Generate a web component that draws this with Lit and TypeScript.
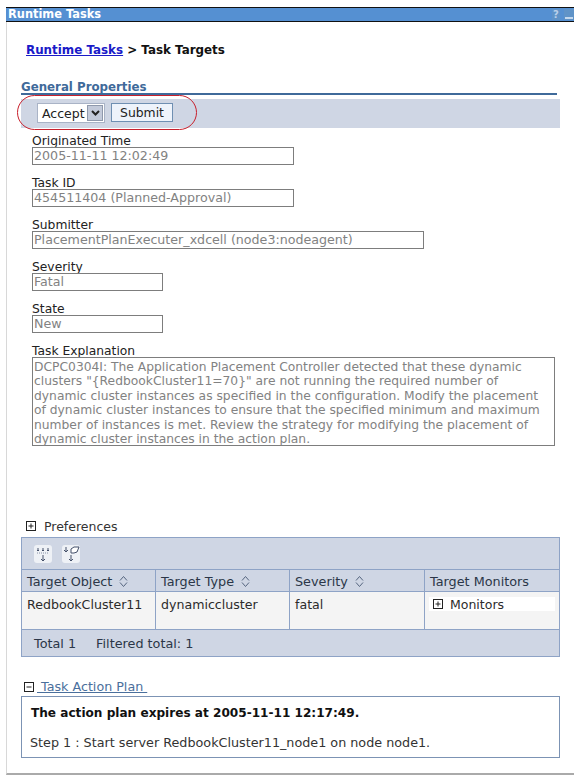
import { LitElement, html, css, svg } from "lit";
import { customElement } from "lit/decorators.js";

const expl = [
  "DCPC0304I: The Application Placement Controller detected that these dynamic",
  'clusters "{RedbookCluster11=70}" are not running the required number of',
  "dynamic cluster instances as specified in the configuration. Modify the placement",
  "of dynamic cluster instances to ensure that the specified minimum and maximum",
  "number of instances is met. Review the strategy for modifying the placement of",
  "dynamic cluster instances in the action plan.",
];

const sortIcon = html`<svg class="sort" width="9" height="13" viewBox="0 0 9 13"><path d="M4.500 1.500 8 5.500M4.500 1.500 1 5.500M4.500 11.500 8 7.500M4.500 11.500 1 7.500" fill="none" stroke="#55657f" stroke-width="1"/></svg>`;
const plus = html`<svg class="tw" width="10" height="10" viewBox="0 0 10 10"><rect x=".5" y=".5" width="9" height="9" fill="#fff" stroke="#222"/><path d="M2.500 5h5M5 2.500v5" stroke="#222"/></svg>`;
const minus = html`<svg class="tw" width="10" height="10" viewBox="0 0 10 10"><rect x=".5" y=".5" width="9" height="9" fill="#fff" stroke="#222"/><path d="M2.500 5h5" stroke="#222"/></svg>`;

@customElement("app-root")
export class AppRoot extends LitElement {
  static styles = css`
    :host { display: block; width: 581px; height: 780px; background: #fff; font-family: "DejaVu Sans", Verdana, sans-serif; font-size: 12.5px; color: #222; overflow: hidden; }
    .frame { position: relative; margin: 7px 7px 0 6px; height: 768px; box-sizing: border-box; border-left: 1px solid #d8d8d8; border-bottom: 2px solid #aaa; }
    .title { height: 15px; box-sizing: border-box; margin-left: -1px; background: #5590d2; border-top: 1px solid #111; border-bottom: 1px solid #111; display: flex; align-items: center; justify-content: space-between; color: #fff; font-weight: bold; font-size: 11.4px; padding: 0 0 0 2px; line-height: 13px; }
    .wicons { display: flex; gap: 4px; align-items: center; }
    .help { width: 8px; height: 11px; font-size: 10px; line-height: 11px; text-align: center; color: #b9d0ea; background: #5f93c8; }
    .min { width: 10px; height: 11px; background: #5f93c8; display: flex; align-items: flex-end; justify-content: center; padding-bottom: 1px; box-sizing: border-box; }
    .min i { display: block; width: 8px; height: 2px; background: #c4d8ee; }
    .crumb { margin: 20px 0 0 19px; height: 15px; line-height: 17px; font-weight: bold; font-size: 11.9px; color: #111; }
    .crumb a { color: #1a1ac8; text-decoration: underline; }
    .gp { margin: 21px 0 0 14px; width: 536px; height: 17px; box-sizing: border-box; border-bottom: 2px solid #3f6a9a; color: #3f6a9a; font-weight: bold; font-size: 11.8px; line-height: 19px; }
    .band { margin: 4px 0 0 14px; width: 539px; height: 29px; background: #cfd6e4; display: flex; align-items: flex-start; padding: 4px 0 0 16px; box-sizing: border-box; gap: 6px; }
    .sel { width: 68px; height: 20px; box-sizing: border-box; background: #fff; border: 1px solid #a9b3c6; display: flex; align-items: center; justify-content: space-between; padding: 0 1px 0 4px; font-size: 12.5px; color: #222; }
    .sel i { width: 16px; height: 16px; background: #c3cada; border: 1px solid #8f99ac; box-sizing: border-box; display: flex; align-items: center; justify-content: center; }
    .btn { width: 62px; height: 19px; box-sizing: border-box; background: #eef3fb; border: 1px solid #6f8fb2; text-align: center; line-height: 17px; font-size: 12.4px; color: #222; }
    .oval { position: absolute; left: 10px; top: 88px; width: 180px; height: 35px; box-sizing: border-box; border: 1.500px solid #c8202c; border-radius: 18px; }
    .fields { margin: 4px 0 0 25px; display: flex; flex-direction: column; gap: 9px; }
    .f { display: flex; flex-direction: column; }
    .f label { height: 15px; line-height: 19px; font-size: 12.3px; color: #222; }
    .v { height: 18px; box-sizing: border-box; border: 1px solid #7d7d7d; background: #fff; color: #828282; font-size: 12.65px; line-height: 15px; padding-left: 1px; white-space: nowrap; }
    .w262 { width: 262px; } .w392 { width: 392px; } .w131 { width: 131px; }
    .area { width: 523px; height: 89px; box-sizing: border-box; border: 1px solid #7d7d7d; color: #828282; font-size: 12.3px; line-height: 14.4px; padding: 2px 0 0 1px; white-space: nowrap; }
    .pref { margin: 72px 0 0 19px; height: 16px; display: flex; align-items: center; gap: 8px; font-size: 12.5px; color: #333; }
    .tw { flex: none; }
    .tbl { margin: 3px 0 0 14px; width: 539px; height: 120px; box-sizing: border-box; border: 1px solid #8ea3c6; background: #cfd6e4; display: flex; flex-direction: column; }
    .tools { height: 32px; display: flex; align-items: center; gap: 10px; padding-left: 12px; box-sizing: border-box; border-bottom: 1px solid #8ea3c6; }
    .tb { width: 18px; height: 18px; background: #eef1f6; border-radius: 3px; display: block; }
    .row { display: grid; grid-template-columns: 134px 134px 135px 1fr; }
    .head { height: 22px; border-bottom: 1px solid #8ea3c6; box-sizing: border-box; }
    .head div { display: flex; align-items: center; gap: 7px; padding: 1px 0 0 5px; border-right: 1px solid #8ea3c6; font-size: 12.8px; color: #2b3648; }
    .head div:last-child, .body div:last-child { border-right: 0; }
    .body { height: 38px; background: #f4f4f4; border-bottom: 1px solid #8ea3c6; box-sizing: border-box; }
    .body div { padding: 5px 0 0 5px; border-right: 1px solid #8ea3c6; font-size: 12.6px; line-height: 15px; color: #2b2b2b; }
    .body div.cell4 { padding: 5px 4px 0 4px; }
    .body div.mon { height: 14px; background: #fff; padding: 0 0 0 4px; display: flex; align-items: center; gap: 7px; border: 0; font-size: 12.5px; }
    .foot { flex: 1; display: flex; align-items: center; gap: 20px; padding: 1px 0 0 12px; font-size: 12.8px; color: #2b3648; }
    .tap { margin: 23px 0 0 17px; height: 16px; display: flex; align-items: flex-start; gap: 3px; font-size: 12.7px; line-height: 14px; }
    .tap .tw { margin-top: 2px; }
    .tap a { color: #4a6f9c; text-decoration: underline; white-space: pre; }
    .plan { margin: 0 0 0 14px; width: 539px; height: 62px; box-sizing: border-box; border: 1px solid #7c93b4; padding: 8px 0 0 9px; font-size: 12.75px; color: #222; }
    .plan b { display: block; color: #111; line-height: 16px; font-size: 12.1px; }
    .plan p { margin: 14px 0 0 -1px; line-height: 16px; color: #333; }
  `;

  render() {
    return html`<div class="frame">
      <div class="title"><span>Runtime Tasks</span><span class="wicons"><span class="help">?</span><span class="min"><i></i></span></span></div>
      <div class="crumb"><a>Runtime Tasks</a> &gt; Task Targets</div>
      <div class="gp">General Properties</div>
      <div class="band">
        <div class="sel">Accept<i><svg width="9" height="6" viewBox="0 0 9 6"><path d="M1 1l3.500 3.500L8 1" fill="none" stroke="#222" stroke-width="2"/></svg></i></div>
        <div class="btn">Submit</div>
      </div>
      <div class="oval"></div>
      <div class="fields">
        <div class="f"><label>Originated Time</label><div class="v w262">2005-11-11 12:02:49</div></div>
        <div class="f"><label>Task ID</label><div class="v w262">454511404 (Planned-Approval)</div></div>
        <div class="f"><label>Submitter</label><div class="v w392">PlacementPlanExecuter_xdcell (node3:nodeagent)</div></div>
        <div class="f"><label>Severity</label><div class="v w131">Fatal</div></div>
        <div class="f"><label>State</label><div class="v w131">New</div></div>
        <div class="f"><label>Task Explanation</label><div class="area">${expl.map((l) => html`<div>${l}</div>`)}</div></div>
      </div>
      <div class="pref">${plus}<span>Preferences</span></div>
      <div class="tbl">
        <div class="tools">
          <svg class="tb" viewBox="0 0 18 18">${svg`<path d="M3 8h12" stroke="#8a94a8" stroke-dasharray="1 1" fill="none"/><path d="M4 3v3M3 5l1 1 1-1M9 3v3M8 5l1 1 1-1M14 3v3M13 5l1 1 1-1M9 10v6M7 14l2 2 2-2" stroke="#44506a" fill="none"/>`}</svg>
          <svg class="tb" viewBox="0 0 18 18">${svg`<path d="M9 4l3-2h5l-2 5-3 1H9z" fill="#fff" stroke="#44506a"/><path d="M4 2v5M2 5l2 2 2-2M9 10v6M7 14l2 2 2-2" stroke="#44506a" fill="none"/>`}</svg>
        </div>
        <div class="row head">
          <div>Target Object ${sortIcon}</div><div>Target Type ${sortIcon}</div><div>Severity ${sortIcon}</div><div>Target Monitors</div>
        </div>
        <div class="row body">
          <div>RedbookCluster11</div><div>dynamiccluster</div><div>fatal</div>
          <div class="cell4"><div class="mon">${plus}<span>Monitors</span></div></div>
        </div>
        <div class="foot"><span>Total 1</span><span>Filtered total: 1</span></div>
      </div>
      <div class="tap">${minus}<a> Task Action Plan </a></div>
      <div class="plan"><b>The action plan expires at 2005-11-11 12:17:49.</b><p>Step 1 : Start server RedbookCluster11_node1 on node node1.</p></div>
    </div>`;
  }
}
